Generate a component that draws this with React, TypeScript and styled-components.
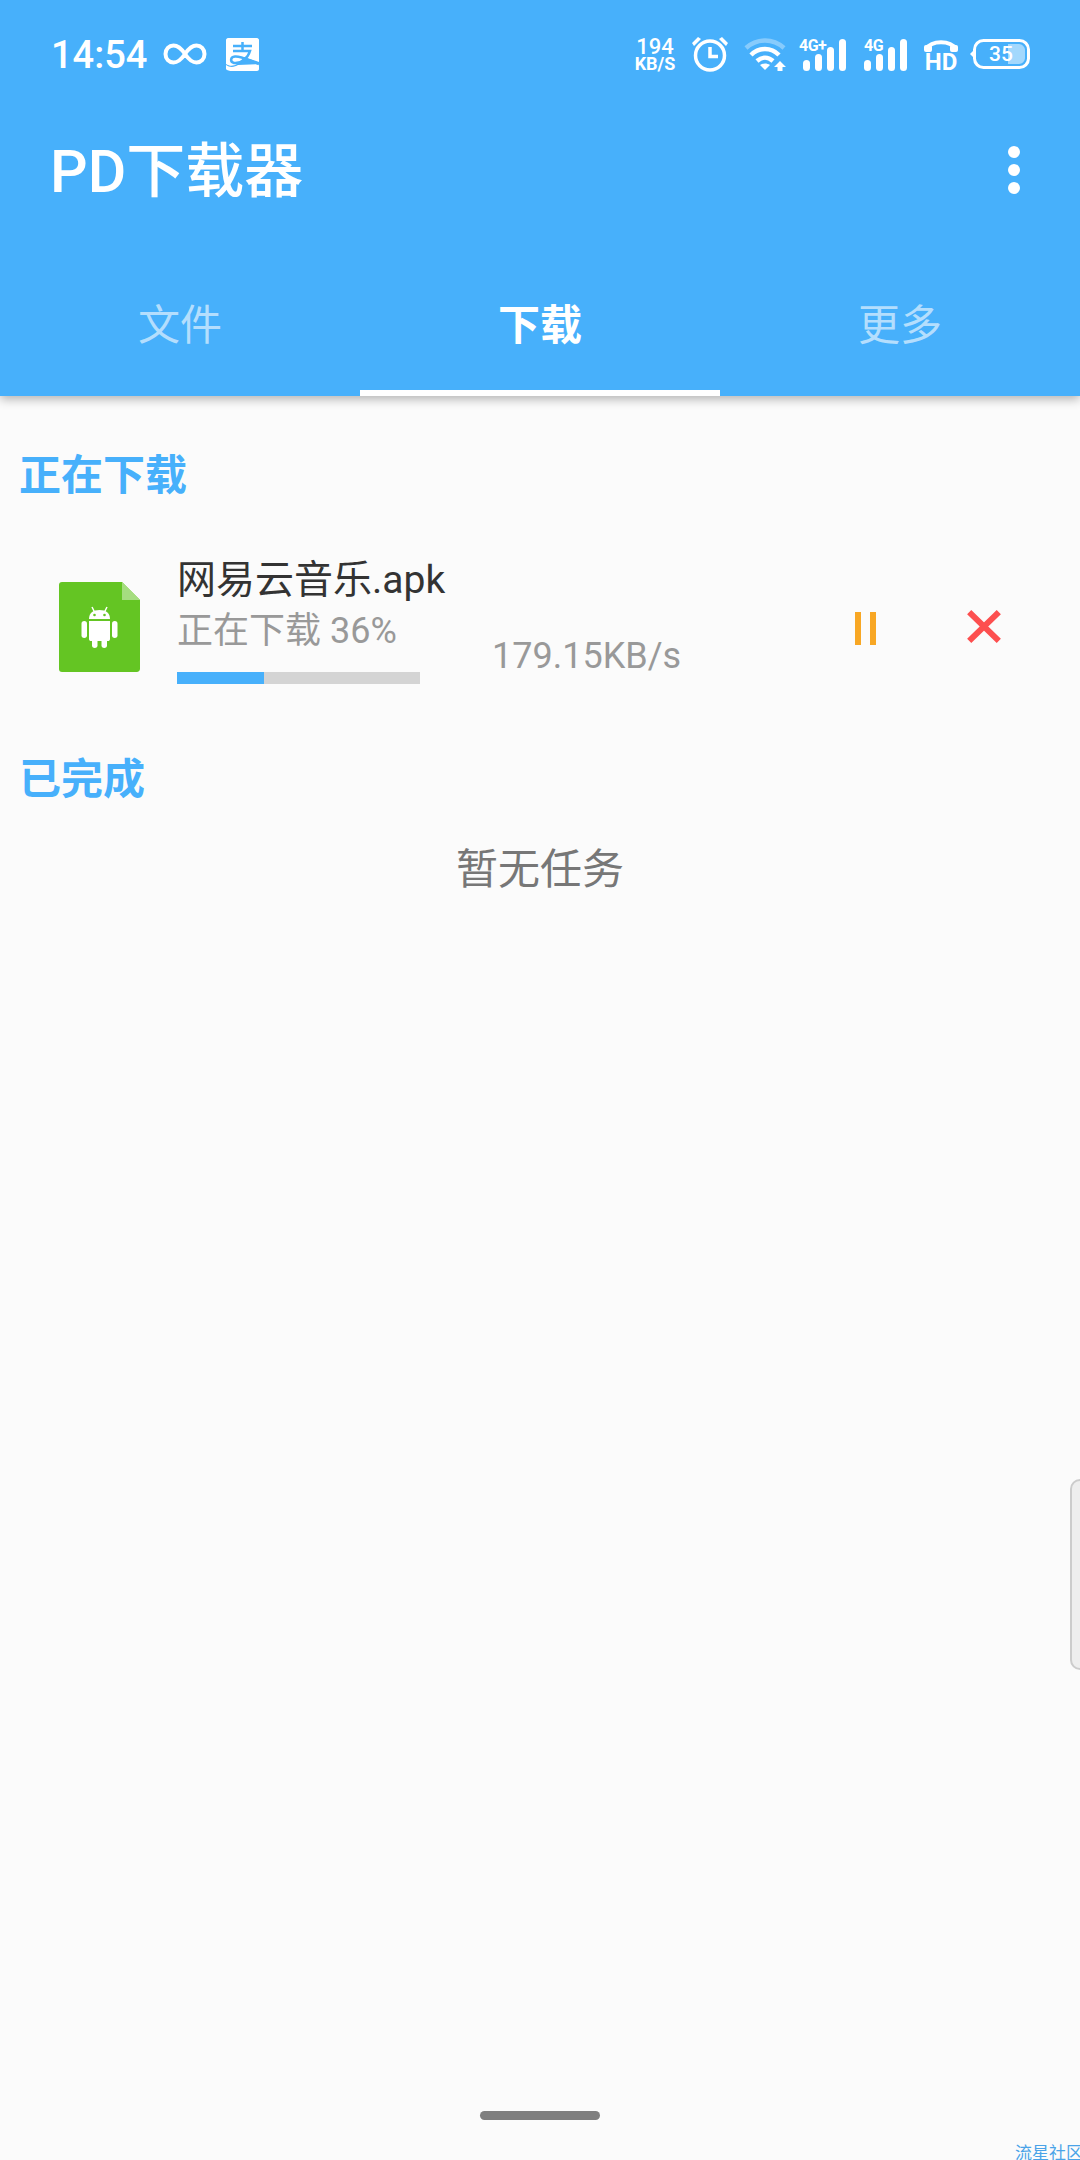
import * as React from 'react'
import styled, { createGlobalStyle } from 'styled-components'

const BLUE = '#47b0fb'
const CJK = `Roboto, "Noto Sans CJK SC", sans-serif`

const GlobalStyle = createGlobalStyle`
	html, body {
		margin: 0;
		padding: 0;
		background: #fbfbfb;
		font-family: ${CJK};
	}
	* {
		box-sizing: border-box;
	}
`

const Screen = styled.div`
	position: relative;
	width: 1080px;
	height: 2160px;
	overflow: hidden;
	background: #fbfbfb;
`

const Header = styled.header`
	position: relative;
	height: 396px;
	background: ${BLUE};
	color: #fff;
	box-shadow: 0 3px 10px rgba(0, 0, 0, 0.3);
`

const StatusBar = styled.div`
	height: 108px;
	padding: 0 50px 0 51px;
	display: flex;
	align-items: center;
`

const Clock = styled.span`
	font-size: 38px;
	font-weight: 500;
	margin: 2px 16px 0 0;
`

const StatusRight = styled.div`
	margin-left: auto;
	display: flex;
	align-items: center;
`

const NetSpeed = styled.div`
	display: flex;
	flex-direction: column;
	align-items: center;
	width: 44px;
	margin-right: 15px;
	font-weight: 500;
	line-height: 1;
`

const SpeedValue = styled.span`
	font-size: 22px;
	line-height: 19px;
`

const SpeedUnit = styled.span`
	font-size: 18px;
	line-height: 16px;
	font-weight: 700;
	white-space: nowrap;
`

const Glyph = styled.svg<{ $gap?: number }>`
	display: block;
	flex: none;
	overflow: visible;
	margin-right: ${(p) => p.$gap ?? 0}px;
`

const Toolbar = styled.div`
	height: 144px;
	padding: 0 0 18px 50px;
	display: flex;
	align-items: center;
	justify-content: space-between;
`

const Title = styled.h1`
	margin: 0;
	font-size: 59px;
	font-weight: 500;
	line-height: 1;
`

const MoreButton = styled.div`
	width: 12px;
	margin: -2px 60px 0 0;
	display: flex;
	flex-direction: column;
	gap: 6px;
`

const Dot = styled.span`
	width: 12px;
	height: 12px;
	border-radius: 50%;
	background: #fff;
`

const Tabs = styled.nav`
	height: 144px;
	display: grid;
	grid-template-columns: repeat(3, 360px);
`

const Tab = styled.div<{ $active?: boolean }>`
	display: flex;
	align-items: center;
	justify-content: center;
	font-size: 42px;
	font-weight: ${(p) => (p.$active ? 700 : 400)};
	color: ${(p) => (p.$active ? '#fff' : 'rgba(255, 255, 255, 0.6)')};
	border-bottom: 6px solid ${(p) => (p.$active ? '#fff' : 'transparent')};
`

const SectionTitle = styled.h2<{ $top: number }>`
	margin: ${(p) => p.$top}px 0 0 19px;
	font-size: 42px;
	font-weight: 700;
	line-height: 60px;
	color: ${BLUE};
`

const TaskRow = styled.div`
	margin-top: 43px;
	padding-left: 59px;
	display: flex;
	align-items: flex-start;
`

const FileIcon = styled.svg`
	display: block;
	flex: none;
	margin-top: 33px;
`

const Info = styled.div`
	width: 243px;
	margin: 7px 0 0 37px;
`

const FileName = styled.div`
	font-size: 39px;
	line-height: 48px;
	color: #333;
	white-space: nowrap;
`

const TaskStatus = styled.div`
	font-size: 36px;
	line-height: 46px;
	margin-top: 4px;
	color: #999;
	white-space: nowrap;
`

const Progress = styled.div`
	width: 243px;
	height: 12px;
	margin-top: 18px;
	background: #d4d4d4;
`

const ProgressFill = styled.div`
	height: 100%;
	background: ${BLUE};
`

const Speed = styled.div`
	width: 188px;
	margin: 86px 0 0 72px;
	font-size: 36px;
	line-height: 42px;
	color: #999;
	white-space: nowrap;
`

const PauseIcon = styled.div`
	margin: 63px 0 0 175px;
	display: flex;
	gap: 9px;
`

const PauseBar = styled.span`
	width: 6px;
	height: 33px;
	background: #f8a724;
`

const CloseIcon = styled.svg`
	display: block;
	flex: none;
	margin: 61px 0 0 91px;
`

const Empty = styled.div`
	margin-top: 30px;
	text-align: center;
	font-size: 42px;
	line-height: 60px;
	color: #777;
`

const SideHandle = styled.div`
	position: absolute;
	left: 1070px;
	top: 1479px;
	width: 20px;
	height: 191px;
	background: #eee;
	border: 2px solid #ccc;
	border-radius: 10px;
`

const HomeBar = styled.div`
	position: absolute;
	left: 480px;
	top: 2111px;
	width: 120px;
	height: 9px;
	border-radius: 5px;
	background: #7f7f7f;
`

const Watermark = styled.div`
	position: absolute;
	left: 1015px;
	top: 2143px;
	font-size: 17px;
	line-height: 20px;
	color: #4aa3e8;
	white-space: nowrap;
`

const SignalText = styled.text`
	font-family: Roboto, sans-serif;
	font-size: 16px;
	font-weight: 700;
	letter-spacing: -0.5px;
	fill: #fff;
`

const BAR_HEIGHTS = [11, 17, 24, 32]

function Signal({ label, width, gap }: { label: string; width: number; gap: number }) {
	return (
		<Glyph width={width} height={34} viewBox={`0 0 ${width} 34`} $gap={gap}>
			<SignalText x="0" y="14">
				{label}
			</SignalText>
			{BAR_HEIGHTS.map((h, i) => (
				<rect key={h} x={width - 43 + i * 12} y={34 - h} width={7} height={h} rx={3.5} fill="#fff" />
			))}
		</Glyph>
	)
}

export default function App() {
	const percent = 36

	return (
		<Screen>
			<GlobalStyle />
			<Header>
				<StatusBar>
					<Clock>14:54</Clock>
					<Glyph width={44} height={24} viewBox="0 0 44 24" $gap={19}>
						<path
							d="M22 12C18 6 15 3.500 10.500 3.500C6 3.500 2.500 7 2.500 12C2.500 17 6 20.500 10.500 20.500C15 20.500 18 18 22 12C26 6 29 3.500 33.500 3.500C38 3.500 41.500 7 41.500 12C41.500 17 38 20.500 33.500 20.500C29 20.500 26 18 22 12Z"
							fill="none"
							stroke="#fff"
							strokeWidth="4"
						/>
					</Glyph>
					<Glyph width={33} height={33} viewBox="0 0 33 33">
						<path d="M2 0H31C32 0 33 1 33 2V24L18 19C12 27 6 30 0 26V2C0 1 1 0 2 0Z" fill="#fff" />
						<path d="M10 32C5 33 1 33 0 31V27C4 30 9 29 12 27L33 26V31C33 32 32 33 31 33H2Z" fill="#fff" />
						<path
							d="M7 8H26M16.500 4V12M7 13H24C22 20 15 26 8 25C4 24 4 19 9 18.500C15 18 22 22 33 26"
							fill="none"
							stroke={BLUE}
							strokeWidth="2.500"
						/>
					</Glyph>
					<StatusRight>
						<NetSpeed>
							<SpeedValue>194</SpeedValue>
							<SpeedUnit>KB/S</SpeedUnit>
						</NetSpeed>
						<Glyph width={36} height={34} viewBox="0 0 36 34" $gap={16}>
							<circle cx="18" cy="18.500" r="14.500" fill="none" stroke="#fff" strokeWidth="3.500" />
							<path d="M18 10V19.500H26" fill="none" stroke="#fff" strokeWidth="3.500" />
							<path d="M0 6L6 0L9 2L2 9ZM36 6L30 0L27 2L34 9Z" fill="#fff" />
						</Glyph>
						<Glyph width={42} height={34} viewBox="0 0 42 34" $gap={13}>
							<path d="M2 11C13 1 29 1 40 11" fill="none" stroke="rgba(255,255,255,.35)" strokeWidth="4.500" />
							<path d="M7 18C15 10 27 10 35 18" fill="none" stroke="#fff" strokeWidth="4.500" />
							<path d="M13 24C18 19.500 24 19.500 29 24" fill="none" stroke="#fff" strokeWidth="4.500" />
							<path d="M16 28C19 26 23 26 26 28L21 33Z" fill="#fff" />
							<path d="M36 24L42 30H38.500V34H33.500V30H30Z" fill="#fff" />
						</Glyph>
						<Signal label="4G+" width={47} gap={18} />
						<Signal label="4G" width={43} gap={17} />
						<Glyph width={34} height={33} viewBox="0 0 34 33" $gap={12}>
							<path d="M2 11C8 2 26 2 32 11" fill="none" stroke="#fff" strokeWidth="4" />
							<rect x="0" y="7" width="8" height="7" rx="2" fill="#fff" />
							<rect x="26" y="7" width="8" height="7" rx="2" fill="#fff" />
							<text x="17" y="32" textAnchor="middle" fontFamily="Roboto, sans-serif" fontWeight="700" fontSize="24" fill="#fff">
								HD
							</text>
						</Glyph>
						<Glyph width={60} height={30} viewBox="0 0 60 30">
							<path d="M0 15L4 11V19Z" fill="#fff" />
							<rect x="4.500" y="1.500" width="54" height="27" rx="9" fill="none" stroke="#fff" strokeWidth="3" />
							<path d="M38 5H49C52 5 55 8 55 11V19C55 22 52 25 49 25H38Z" fill="rgba(255,255,255,.5)" />
							<text x="31" y="22" textAnchor="middle" fontFamily="Roboto, sans-serif" fontWeight="500" fontSize="21" fill="#fff">
								35
							</text>
						</Glyph>
					</StatusRight>
				</StatusBar>
				<Toolbar>
					<Title>PD下载器</Title>
					<MoreButton>
						<Dot />
						<Dot />
						<Dot />
					</MoreButton>
				</Toolbar>
				<Tabs>
					<Tab>文件</Tab>
					<Tab $active>下载</Tab>
					<Tab>更多</Tab>
				</Tabs>
			</Header>

			<SectionTitle $top={50}>正在下载</SectionTitle>
			<TaskRow>
				<FileIcon width={81} height={90} viewBox="0 0 81 90">
					<path d="M3 0H63L81 18V87C81 89 79 90 78 90H3C1 90 0 89 0 87V3C0 1 1 0 3 0Z" fill="#64c523" />
					<path d="M63 0L81 18H63Z" fill="#a5dd7f" />
					<g fill="#fff">
						<path d="M30 37C30 31 34 28 40.500 28C47 28 51 31 51 37Z" />
						<path d="M33 25L35.500 30M48 25L45.500 30" stroke="#fff" strokeWidth="1.500" />
						<path d="M30 39H51V57C51 58.500 50 59 49 59H32C31 59 30 58.500 30 57Z" />
						<rect x="22.500" y="39" width="5.500" height="17" rx="2.750" />
						<rect x="53" y="39" width="5.500" height="17" rx="2.750" />
						<rect x="33" y="55" width="5.500" height="11" rx="2.750" />
						<rect x="42.500" y="55" width="5.500" height="11" rx="2.750" />
					</g>
					<circle cx="35.500" cy="33" r="1.300" fill="#64c523" />
					<circle cx="45.500" cy="33" r="1.300" fill="#64c523" />
				</FileIcon>
				<Info>
					<FileName>网易云音乐.apk</FileName>
					<TaskStatus>正在下载 {percent}%</TaskStatus>
					<Progress>
						<ProgressFill style={{ width: `${percent}%` }} />
					</Progress>
				</Info>
				<Speed>179.15KB/s</Speed>
				<PauseIcon>
					<PauseBar />
					<PauseBar />
				</PauseIcon>
				<CloseIcon width={34} height={33} viewBox="0 0 34 33">
					<path d="M2.200 2.200L31.800 30.800M31.800 2.200L2.200 30.800" stroke="#fd4f4f" strokeWidth="6" fill="none" />
				</CloseIcon>
			</TaskRow>
			<SectionTitle $top={66}>已完成</SectionTitle>
			<Empty>暂无任务</Empty>

			<SideHandle />
			<HomeBar />
			<Watermark>流星社区</Watermark>
		</Screen>
	)
}
